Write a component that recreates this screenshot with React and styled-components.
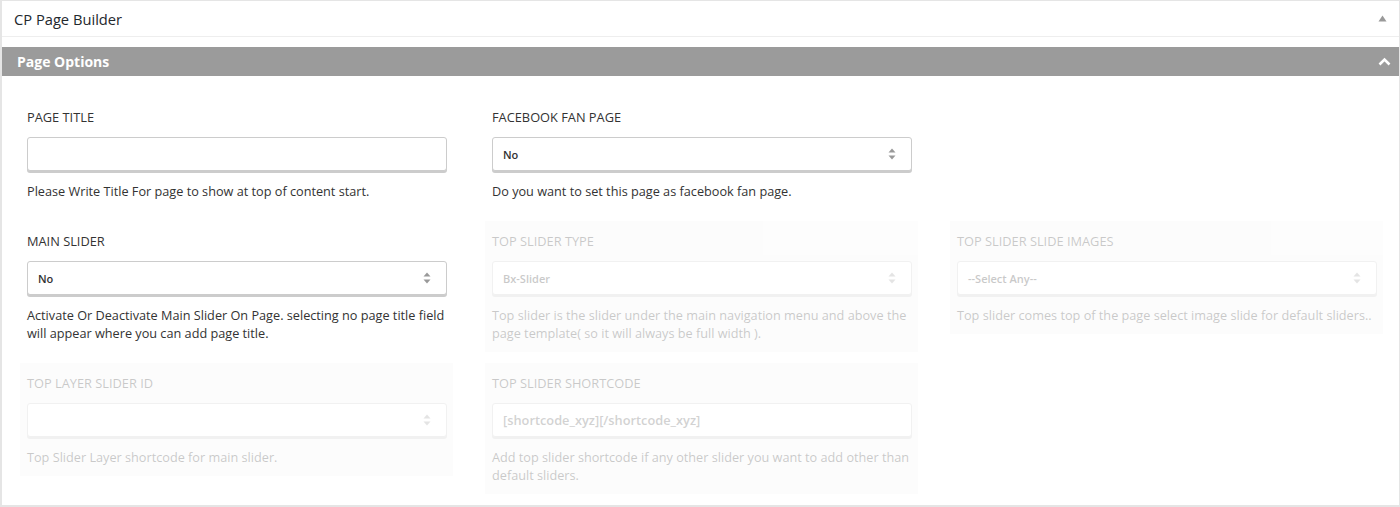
import styled, { createGlobalStyle } from 'styled-components';

const GlobalStyle = createGlobalStyle`
  body {
    margin: 0;
    background: #fff;
    font-family: "Open Sans", "Noto Sans", sans-serif;
    color: #333;
  }
`;

const fields = [
  [
    { label: 'Page Title', type: 'input', desc: 'Please Write Title For page to show at top of content start.' },
    { label: 'Facebook Fan Page', type: 'select', value: 'No', desc: 'Do you want to set this page as facebook fan page.' },
  ],
  [
    {
      label: 'Main Slider',
      type: 'select',
      value: 'No',
      desc: 'Activate Or Deactivate Main Slider On Page. selecting no page title field will appear where you can add page title.',
    },
    {
      label: 'Top Slider Type',
      type: 'select',
      value: 'Bx-Slider',
      faded: true,
      desc: 'Top slider is the slider under the main navigation menu and above the page template( so it will always be full width ).',
    },
    {
      label: 'Top Slider Slide Images',
      type: 'select',
      value: '--Select Any--',
      faded: true,
      desc: 'Top slider comes top of the page select image slide for default sliders..',
    },
  ],
  [
    { label: 'Top Layer Slider ID', type: 'select', value: '', faded: true, desc: 'Top Slider Layer shortcode for main slider.' },
    {
      label: 'Top Slider Shortcode',
      type: 'input',
      value: '[shortcode_xyz][/shortcode_xyz]',
      faded: true,
      desc: 'Add top slider shortcode if any other slider you want to add other than default sliders.',
    },
  ],
];

const SelectArrows = () => (
  <svg width="8" height="12" viewBox="0 0 8 12">
    <path d="M4 0.5 L7.5 4.5 H0.5 Z" fill="#999" />
    <path d="M4 11.5 L7.5 7.5 H0.5 Z" fill="#999" />
  </svg>
);

const Field = ({ item }) => (
  <Item $faded={item.faded}>
    <Label>{item.label}</Label>
    {item.type === 'select' ? (
      <Control>
        <SelectValue>{item.value}</SelectValue>
        <SelectArrows />
      </Control>
    ) : (
      <Control>
        <InputValue>{item.value}</InputValue>
      </Control>
    )}
    <Desc>{item.desc}</Desc>
  </Item>
);

const App = () => (
  <>
    <GlobalStyle />
    <Postbox>
      <Header>
        <Title>CP Page Builder</Title>
        <svg width="9" height="7" viewBox="0 0 9 7">
          <path d="M4.5 0.5 L8.5 6.5 H0.5 Z" fill="#999" />
        </svg>
      </Header>
      <Bar>
        <BarTitle>Page Options</BarTitle>
        <svg width="13" height="9" viewBox="0 0 13 9">
          <path d="M1.5 7.5 L6.5 2.5 L11.5 7.5" fill="none" stroke="#fff" strokeWidth="2.6" />
        </svg>
      </Bar>
      <Content>
        {fields.map((row, i) => (
          <Row key={i}>
            {row.map(item => (
              <Field key={item.label} item={item} />
            ))}
          </Row>
        ))}
      </Content>
    </Postbox>
  </>
);

export default App;

const Postbox = styled.div`
  border-top: 1px solid #e5e5e5;
  border-left: 2px solid #e5e5e5;
  border-right: 1px solid #e5e5e5;
  border-bottom: 2px solid #e5e5e5;
  height: 507px;
  box-sizing: border-box;
`;

const Header = styled.div`
  height: 35px;
  border-bottom: 1px solid #eee;
  display: flex;
  align-items: center;
  justify-content: space-between;
  padding: 0 12px 0 12px;
  margin-bottom: 10px;
`;

const Title = styled.h2`
  margin: 0;
  font-size: 14.7px;
  font-weight: 400;
  color: #23282d;
`;

const Bar = styled.div`
  height: 29px;
  background: #9b9b9b;
  display: flex;
  align-items: center;
  justify-content: space-between;
  padding: 0 8px 0 15px;
`;

const BarTitle = styled.h3`
  margin: 0;
  font-size: 14px;
  font-weight: 700;
  color: #fff;
`;

const Content = styled.div`
  padding: 21px 0 12px 18px;
  display: flex;
  flex-direction: column;
  gap: 11px;
`;

const Row = styled.div`
  display: grid;
  grid-template-columns: repeat(3, 433px);
  column-gap: 32px;
  align-items: start;
`;

const Item = styled.div`
  padding: 10px 6px 10px 7px;
  background: ${p => (p.$faded ? '#f7f7f7' : 'transparent')};
  opacity: ${p => (p.$faded ? 0.26 : 1)};
`;

const Label = styled.div`
  font-size: 12.8px;
  line-height: 20px;
  text-transform: uppercase;
  color: #333;
  margin-bottom: 10px;
`;

const Control = styled.div`
  height: 34px;
  box-sizing: border-box;
  border: 1px solid #ccc;
  border-radius: 3px;
  box-shadow: 0 2px 0 #ccc;
  background: #fff;
  display: flex;
  align-items: center;
  justify-content: space-between;
  padding: 0 15px 0 10px;
  margin-bottom: 11px;
`;

const SelectValue = styled.span`
  font-size: 11px;
  font-weight: 600;
  color: #333;
`;

const InputValue = styled.span`
  font-size: 12.8px;
  font-weight: 600;
  color: #555;
`;

const Desc = styled.p`
  margin: 0;
  padding-right: 2.7px;
  font-size: 12.7px;
  line-height: 18px;
  color: #333;
`;
